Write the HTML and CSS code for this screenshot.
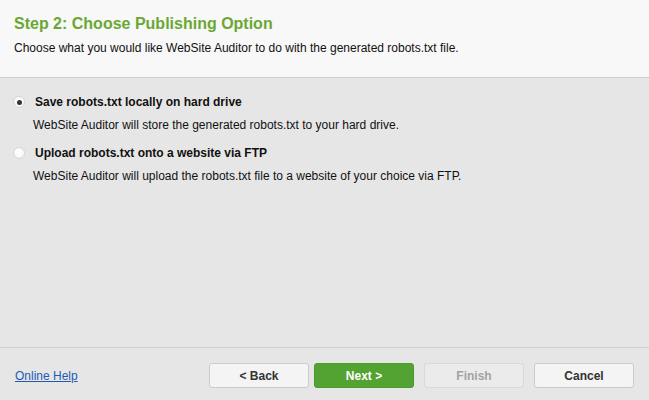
FILE: index.html
```html
<!DOCTYPE html>
<html lang="en">
  <head>
    <meta charset="UTF-8" />
    <title>Publishing Option</title>
    <link rel="stylesheet" href="styles.css">
  </head>
  <body>
    <div class="wizard">
      <div class="header">
        <h1>Step 2: Choose Publishing Option</h1>
        <p>Choose what you would like WebSite Auditor to do with the generated robots.txt file.</p>
      </div>
      <div class="options">
        <label class="option">
          <span class="radio checked"></span>
          <span class="label">Save robots.txt locally on hard drive</span>
        </label>
        <div class="desc">WebSite Auditor will store the generated robots.txt to your hard drive.</div>
        <label class="option">
          <span class="radio"></span>
          <span class="label">Upload robots.txt onto a website via FTP</span>
        </label>
        <div class="desc">WebSite Auditor will upload the robots.txt file to a website of your choice via FTP.</div>
      </div>
      <div class="footer">
        <a href="#" class="help">Online Help</a>
        <div class="buttons">
          <button class="btn">&lt; Back</button>
          <button class="btn next">Next &gt;</button>
          <button class="btn disabled">Finish</button>
          <button class="btn">Cancel</button>
        </div>
      </div>
    </div>
  </body>
</html>
```
FILE: styles.css
```css
html,
body {
  margin: 0;
  padding: 0;
  background-color: #e6e6e6;
  font-family: 'Liberation Sans', Arial, sans-serif;
  font-size: 12px;
  color: #111;
}

.wizard {
  width: 649px;
  height: 400px;
  display: flex;
  flex-direction: column;
}

.header {
  height: 77px;
  background-color: #f8f8f8;
  border-bottom: 1px solid #cfcfcf;
  padding: 0 14px;
  box-sizing: content-box;
}

.header h1 {
  margin: 0;
  padding-top: 14px;
  font-size: 16px;
  line-height: 19px;
  color: #6aa833;
}

.header p {
  margin: 7px 0 0;
  line-height: 16px;
}

.options {
  flex: 1;
  padding: 14px 13px 0;
}

.option {
  display: flex;
  align-items: center;
  height: 16px;
  margin-top: 2px;
}

.option + .desc + .option {
  margin-top: 12px;
}

.radio {
  width: 12px;
  height: 12px;
  border-radius: 50%;
  background: radial-gradient(circle at 50% 35%, #ffffff, #f3f3f3);
  border: 1px solid #d6d6d6;
  box-sizing: border-box;
  margin-right: 10px;
  position: relative;
}

.radio.checked::after {
  content: '';
  position: absolute;
  left: 2.5px;
  top: 2.5px;
  width: 5px;
  height: 5px;
  border-radius: 50%;
  background-color: #333;
}

.label {
  font-weight: bold;
}

.desc {
  margin: 7px 0 0 20px;
  line-height: 16px;
}

.footer {
  height: 52px;
  border-top: 1px solid #cfcfcf;
  display: flex;
  align-items: center;
  justify-content: space-between;
  padding: 0 15px;
}

.help {
  color: #1e5bb8;
  text-decoration: underline;
  padding-top: 4px;
}

.buttons {
  display: flex;
  gap: 10px;
  padding-top: 3px;
}

.btn {
  width: 100px;
  height: 25px;
  border: 1px solid #cbcbcb;
  border-radius: 3px;
  background-color: #f4f4f4;
  font-family: 'Liberation Sans', Arial, sans-serif;
  font-size: 12px;
  font-weight: bold;
  color: #333;
  padding: 0;
}

.btn.next {
  margin-left: -5px;
  background-color: #52a332;
  border-color: #4b9a2c;
  color: #fff;
}

.btn.disabled {
  background-color: #ebebeb;
  border-color: #d8d8d8;
  color: #a3a3a3;
}
```
